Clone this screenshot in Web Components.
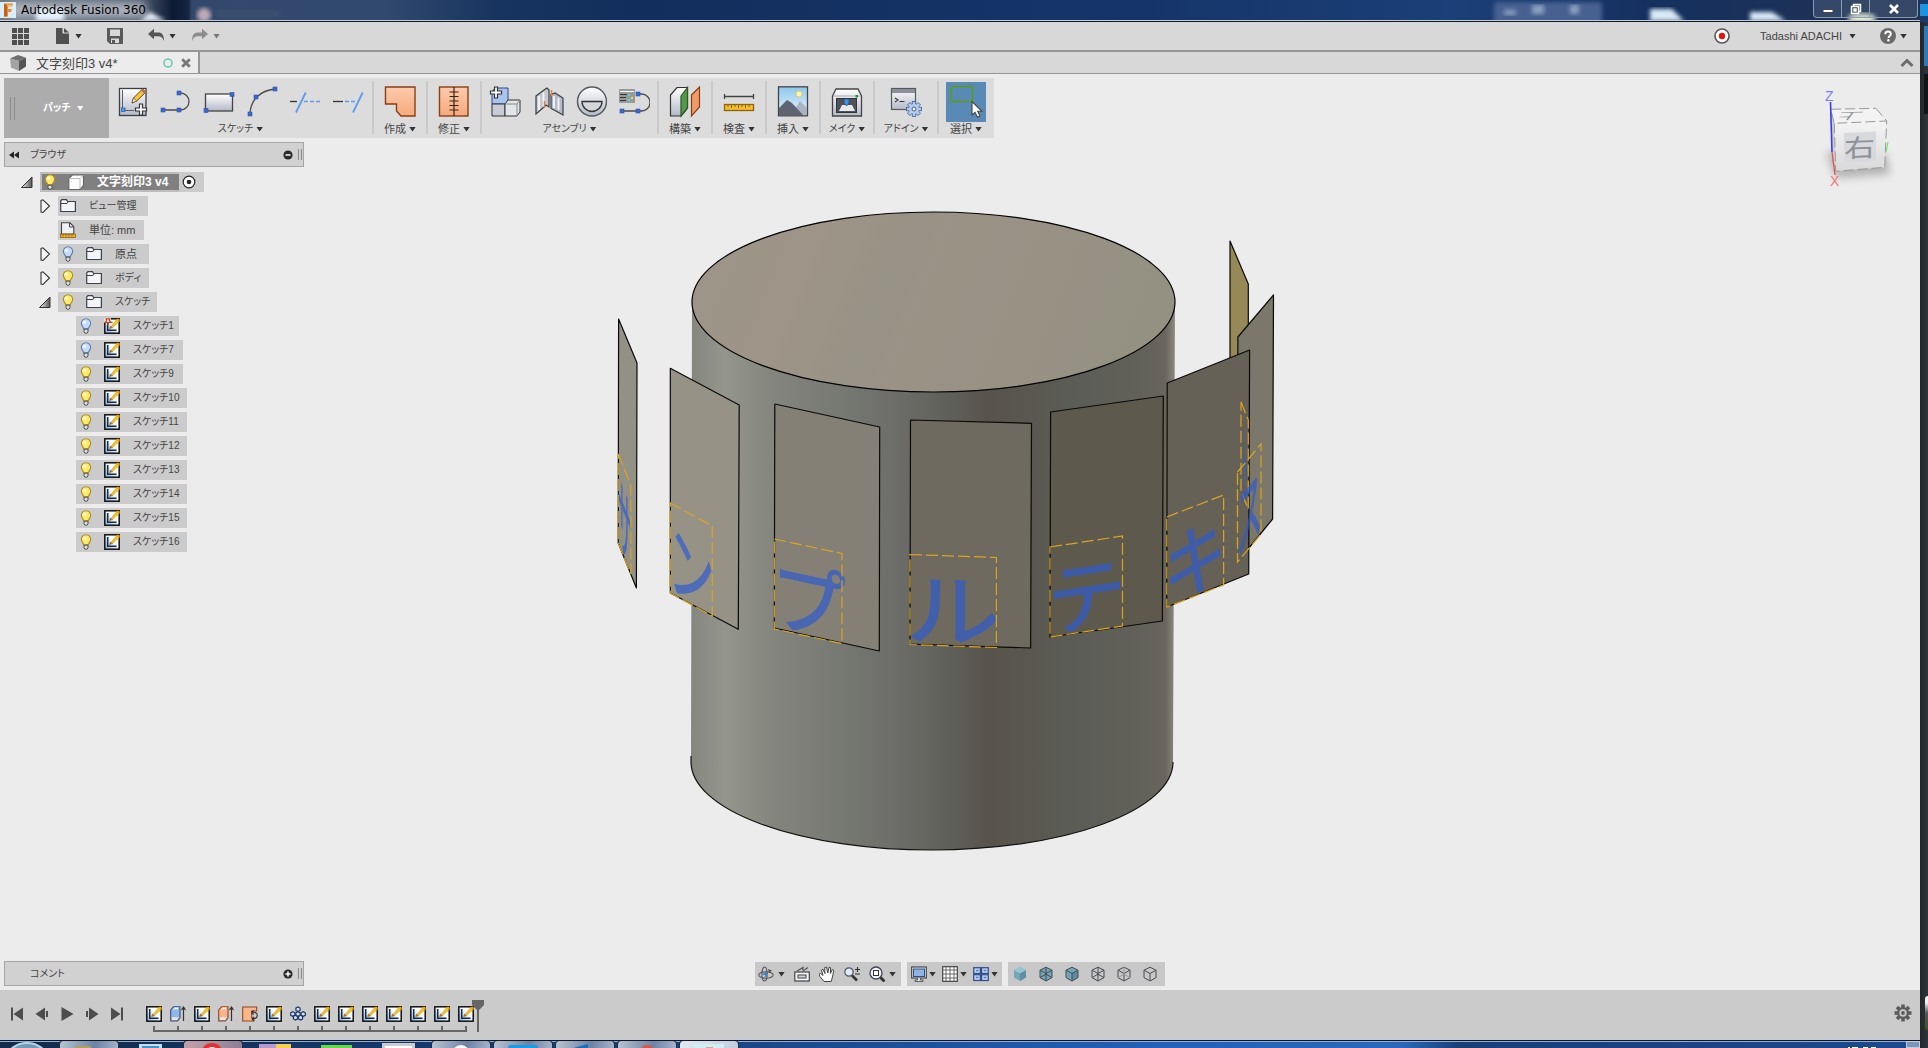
<!DOCTYPE html>
<html lang="ja">
<head>
<meta charset="utf-8">
<title>Autodesk Fusion 360</title>
<style>
html,body{margin:0;height:100%}
body{display:flex;overflow:hidden;background:#2b3035;color:#444;font:11px/16px "Liberation Sans","Noto Sans CJK JP",sans-serif;font-feature-settings:"palt"}
</style>
</head>
<body>
<fusion-app></fusion-app>
<desktop-edge></desktop-edge>
<script>
const BASE = `*{box-sizing:border-box}button{font:inherit;font-feature-settings:inherit;color:inherit;background:none;border:0;padding:0;margin:0;display:flex;align-items:center;cursor:default}svg{display:block}.kana{font-size:10px}`;
/* katakana labels are set one size below the kanji ones */
const kana = s => /[\u30a0-\u30ff]/.test(s) ? 'kana' : '';
function define(name, css, html) {
  customElements.define(name, class extends HTMLElement {
    connectedCallback() {
      if (this.shadowRoot) return;
      const root = this.attachShadow({mode: 'open'});
      root.innerHTML = `<style>${BASE}${css}</style>` + (typeof html === 'function' ? html(this) : html);
    }
  });
}

/* ---------- icons ---------- */
const sq = (x, y) => `<rect x="${x-2}" y="${y-2}" width="4" height="4" fill="#3a68cc" stroke="#2d57b4" stroke-width=".6"/>`;
const steel = `<linearGradient id="s" x1="0" y1="0" x2="0" y2="1"><stop offset="0" stop-color="#fff"/><stop offset="1" stop-color="#b4b9c6"/></linearGradient>`;
const peach = `<linearGradient id="p" x1="0" y1="0" x2="0" y2="1"><stop offset="0" stop-color="#fccbad"/><stop offset="1" stop-color="#f7a97b"/></linearGradient>`;
const bulb = (c, e, d) => `<path d="M8 .8a4.7 4.7 0 0 0-4.7 4.7c0 2.2 1.9 3.200 2.300 5.200h4.800c.4-2 2.300-3 2.300-5.200A4.700 4.700 0 0 0 8 .8z" fill="${c}" stroke="${e}" stroke-width="1.100"/><circle cx="6.500" cy="4.200" r="1.700" fill="${d}"/><path d="M6 11.200h4v2.600L9 15.200H7L6 13.800z" fill="#ddd" stroke="#444" stroke-width=".9"/>`;
const sketch = `<linearGradient id="k" x1="1" y1="0" x2="0" y2="1"><stop offset=".4" stop-color="#fff"/><stop offset="1" stop-color="#7fb6ea"/></linearGradient><rect x=".8" y=".8" width="14.400" height="14.400" fill="url(#k)" stroke="#111" stroke-width="1.500"/><path d="M3.700 3v9.300H12.500" fill="none" stroke="#1c2c44" stroke-width="1.500"/><path d="M5.800 10.300 12.600 1.400 15.600 3 8 10z" fill="#f7c61c" stroke="#b98a10" stroke-width=".5"/><path d="M5.200 11l.9-3.200 2.600 1.700z" fill="#a5683c"/><path d="M12.500 1.500 14 .5 16 1.700 15.300 3.300z" fill="#f59a00"/>`;
const cubeHex = 'M8 1.200 14 4.200V11.600L8 15 2 11.600V4.200z';
const stroke = d => `<path d="${d}" fill="none" stroke="#474b52" stroke-width="1"/>`;
const gearTeeth = (cx, cy, r, w, fill, st = 'none') => { let s = ''; for (let i = 0; i < 8; i++) s += `<rect x="${cx-w/2}" y="${cy-r}" width="${w}" height="${r}" transform="rotate(${i*45} ${cx} ${cy})" fill="${fill}" stroke="${st}" stroke-width=".8"/>`; return s; };
const ICONS = {
  fusion: [16, `<rect width="16" height="16" fill="#d9eef6"/><path d="M4 1.500h9l-1 3H8v2.500h4l-1 3H8v4.500H4z" fill="#ef8b2c"/><path d="M4 1.500l3 2v11H4z" fill="#c9601a"/><path d="M7 3.500h5.500" stroke="#ffc27a"/>`],
  apps: [17, [0,6,12].map(y => [0,6,12].map(x => `<rect x="${x}" y="${y}" width="5" height="5" fill="#505050"/>`).join('')).join('')],
  file: [16, `<path d="M2 0h6.500v5.500H15V16H2z" fill="#505050"/><path d="M10 0 15 4.500H10z" fill="#505050"/>`],
  save: [16, `<path d="M0 0h16v16H3l-3-3z" fill="#5a5a5a"/><path d="M3 1.500h10V8H3zM4 10.500h8V15H4z" fill="#d8d8d8"/><path d="M5 12h3v3H5z" fill="#5a5a5a"/>`],
  undo: [16, `<path d="M0 6 6 .8V4.500h4c4 0 6 2.500 6 8.500-1.500-3.500-3-4.800-6-4.800H6v3z" fill="#555"/>`],
  redo: [16, `<path d="M16 6 10 .8V4.500H6C2 4.500 0 7 0 13c1.500-3.500 3-4.800 6-4.800h4v3z" fill="#8d8d8d"/>`],
  record: [16, `<circle cx="8" cy="8" r="7" fill="#fff" stroke="#555" stroke-width="1.600"/><circle cx="8" cy="8" r="3.200" fill="#e0160e"/>`],
  help: [16, `<circle cx="8" cy="8" r="8" fill="#6a6a6a"/><path d="M5.300 6.200C5.300 4.500 6.400 3.500 8 3.500s2.800.9 2.800 2.500c0 2-2.300 2-2.300 4" fill="none" stroke="#fff" stroke-width="1.900"/><circle cx="8.400" cy="12.300" r="1.200" fill="#fff"/>`],
  up: [14, `<path d="M1.500 10 7 4.500 12.500 10" fill="none" stroke="#6d6d6d" stroke-width="3"/>`],
  doc: [16, `<path d="M0 3.500 8 0l8 2.800-7 3.200z" fill="#6f6f6f"/><path d="M0 3.500 9 6v10L1 12.500z" fill="#a3a3a3"/><path d="M9 6l7-3.200v8.700L9 16z" fill="#555"/>`],
  ring: [12, `<circle cx="6" cy="6" r="4" fill="none" stroke="#6fcab4" stroke-width="1.600"/>`],
  close: [10, `<path d="M1.200 1.200 8.800 8.800M8.800 1.200 1.200 8.800" stroke="#777" stroke-width="2.800"/>`],
  newSketch: [32, steel + `<rect x="2.500" y="2.500" width="26.500" height="27" fill="url(#s)" stroke="#3b3f46" stroke-width="1.300"/><path d="M5.500 4v18.500M8 24.500h9" stroke="#555a66"/><rect x="4.500" y="22" width="3.500" height="3.500" fill="#4e9df0" stroke="#1f5ca8" stroke-width=".7"/><path d="M15 17l1.500-5L25.500 3l3.200 3.200-9 8.800z" fill="#f5c83a" stroke="#5c4620"/><path d="M15 17l1.500-5 3.200 3z" fill="#fff3d8" stroke="#5c4620" stroke-width=".7"/><path d="M24 4.500l1.800-1.700 3 3.200-1.600 1.700z" fill="#c3743c"/><path d="M22.500 18h3v4h4v3h-4v4h-3v-4h-4v-3h4z" fill="#fff" stroke="#333" stroke-width="1.200"/>`],
  line: [32, `<path d="M3 24h17.500a8.500 8.500 0 0 0 0-17H19" fill="none" stroke="#4a4a4a" stroke-width="1.300"/>` + sq(3,24)+sq(19,24)+sq(19,7)],
  rect: [32, steel + `<rect x="2.500" y="8" width="27" height="17" fill="url(#s)" stroke="#444" stroke-width="1.300"/>`+sq(29,8.5)+sq(3,24.5)],
  arc: [32, `<path d="M4 28C4.500 14 14 4.500 29 3" fill="none" stroke="#4a4a4a" stroke-width="1.300"/>`+sq(4,28)+sq(10,11)+sq(29,3)],
  trim: [32, `<path d="M1 15.500h7" stroke="#333" stroke-width="1.300"/><path d="M15 15.500h16" stroke="#5b9cf0" stroke-width="1.300" stroke-dasharray="4 2"/><path d="M7 26.500 16.700 6.500" stroke="#5b9cf0" stroke-width="1.800"/>`],
  extend: [32, `<path d="M1 15.500h10" stroke="#333" stroke-width="1.300"/><path d="M13 15.500h10" stroke="#5b9cf0" stroke-width="1.300" stroke-dasharray="4 2"/><path d="M21 26.500 30.700 6.500" stroke="#5b9cf0" stroke-width="1.800"/>`],
  patch: [32, peach + `<path d="M1.500 1h29.500v29H17l-4.500-5v-7h-11z" fill="url(#p)" stroke="#8a3e14" stroke-width="1.400"/>`],
  stitch: [32, peach + `<rect x="1.500" y="1" width="28.500" height="29" fill="url(#p)" stroke="#8a3e14" stroke-width="1.400"/><path d="M16 1v29M11.500 6h9M11.500 10.500h9M11.500 15h9M11.500 19.500h9M11.500 24h9" stroke="#3a2416" stroke-width="1.200"/>`],
  component: [32, `<path d="M3 6l3-4h13v14l-3 2H3z" fill="#a9c5ee" stroke="#2c4a80"/><path d="M3 18h13v12H3z" fill="#c7ccd6" stroke="#333"/><path d="M16 18l3-4h12v12l-3 4H16z" fill="#e2e5ea" stroke="#333"/><path d="M16 18h12v12M28 18l3-4" fill="none" stroke="#888"/><path d="M5.500 1h3v4h4v3h-4v4h-3V8h-4V5h4z" fill="#fff" stroke="#333" stroke-width="1.200"/>`],
  joint: [32, `<path d="M4 10 12 4l3-2 2 2v17l-3-2-2 2-8 7z" fill="#c4c9d1" stroke="#3b3f46" stroke-width="1.200"/><path d="M7 10v14M11.500 6.500v14" stroke="#f3f5f8" stroke-width="1.800"/><path d="M31 29V12L23 7l-4 1.500v14l4 2z" fill="#b5bbc6" stroke="#3b3f46" stroke-width="1.200"/><path d="M22 10v12M26.500 12v12" stroke="#f3f5f8" stroke-width="1.800"/><path d="M12.500 15v7M19.500 4v6" stroke="#ef7d2b" stroke-width="1.400"/>`],
  jointOrigin: [32, steel + `<circle cx="17" cy="15.500" r="14.500" fill="url(#s)" stroke="#555a61" stroke-width="1.500"/><path d="M7 15.500h20a10 10 0 0 1-20 0z" fill="#d4d7dd" stroke="#333" stroke-width="1.300"/>`],
  motion: [32, `<rect x="1" y="3" width="16" height="14" fill="#9a9a9a"/><path d="M2 5.500h14" stroke="#fff"/><path d="M2 8.500h7M2 11.500h6M2 14.500h6" stroke="#333" stroke-width="1.200"/><path d="M10 9h2M10 14h2" stroke="#3fe0e6" stroke-width="2"/><path d="M13 12h2" stroke="#f4e12c" stroke-width="2"/><path d="M20 8h3.500a8.500 8.500 0 0 1 0 17H4" fill="none" stroke="#4a4a4a" stroke-width="1.300"/>`+sq(20,8)+sq(20,25)+sq(4,25)],
  construct: [32, steel + `<path d="M1.500 9 8 1.500h10.500V22L12 30H1.500z" fill="url(#s)" stroke="#333" stroke-width="1.200"/><path d="M12 10l6.500-8.500V22L12 30z" fill="#54994a" stroke="#2b5a25" stroke-width="1.200"/><path d="M22.500 9 30.500 1v20l-8 9z" fill="#ef9a68" stroke="#8a3e14" stroke-width="1.200"/>`],
  inspect: [32, `<path d="M1.500 10.500h29M1.500 8v5M30.500 8v5" stroke="#444" stroke-width="1.300"/><rect x="1.500" y="18.500" width="29" height="6" fill="#f5bd2b" stroke="#8d6410" stroke-width="1.300"/><path d="M5 19v2M8.500 19v3M12 19v2M15.500 19v3M19 19v2M22.500 19v3M26 19v2" stroke="#8d6410"/>`],
  insert: [32, `<linearGradient id="y" x1="0" y1="0" x2="0" y2="1"><stop offset="0" stop-color="#8cc6ee"/><stop offset="1" stop-color="#eaf6fb"/></linearGradient><rect x="1.500" y=".8" width="29" height="29" fill="url(#y)" stroke="#444" stroke-width="1.300"/><path d="M14 29 23 15l7 7v7z" fill="#a9b4c2"/><path d="M2 22 10 14l5 3 11 12H2z" fill="#5e6471"/><circle cx="22" cy="8" r="3" fill="#fff3b8" stroke="#e8c860"/>`],
  make: [32, steel + `<path d="M1.500 10 5 3h22l3.500 7v20h-29z" fill="url(#s)" stroke="#444" stroke-width="1.300"/><path d="M2 10h28" stroke="#aaa"/><rect x="5.500" y="12.500" width="20" height="14" fill="#4d525b" stroke="#333"/><path d="M8 25l3-6h10l3 6z" fill="#e8eaee"/><path d="M13 13h5v4l-2.500 3-2.500-3z" fill="#4a8fdc" stroke="#1e4c85" stroke-width=".7"/><rect x="24.500" y="9" width="2.500" height="2.500" fill="#1f9a2c"/>`],
  addin: [32, steel + `<rect x="1.500" y="2.500" width="24" height="21" fill="url(#s)" stroke="#555a61" stroke-width="1.200"/><rect x="2" y="3" width="23" height="4" fill="#8a8f98"/><path d="M5 12l3 2-3 2M9.500 15.500h5" fill="none" stroke="#333" stroke-width="1.100"/>` + gearTeeth(24,23,7.5,3.4,'#b7cbea','#3a5f99') + `<circle cx="24" cy="23" r="5" fill="#b7cbea"/><circle cx="24" cy="23" r="2" fill="#fff" stroke="#3a5f99"/>`],
  select: [40, `<rect width="40" height="40" fill="#5989b5"/><rect x="5.500" y="4.500" width="21" height="15" fill="none" stroke="#58a10b" stroke-width="1.400"/><path d="M26 19.500v13.500l3-2.700 2.400 5 2.600-1.200-2.300-4.800H36z" fill="#fff" stroke="#444" stroke-width="1.100"/>`],
  bulbOn: [16, bulb('#ffe96a','#b08a1c','#fffbd0')],
  bulbOff: [16, bulb('#c3dcfb','#5f7fb0','#f2f8ff')],
  cube: [16, `<path d="M.800 4.500 4.500.800h11v10.700L12 15.500H.8z" fill="#fff" stroke="#666" stroke-width="1.200"/><path d="M1 4.500h11V15M12 4.500 15.500 1" fill="none" stroke="#bbb"/>`],
  folder: [16, `<path d="M.700 13.500V3l1.200-1.300h4.600L7.600 3.500h7.800v10z" fill="#f3f5f8" stroke="#3d4149" stroke-width="1.200"/><path d="M1 5.500h6l1-1.500" fill="none" stroke="#3d4149"/>`],
  unit: [16, `<path d="M1.500 12V.8h8.500l3.800 4V12z" fill="#eef1f6" stroke="#444" stroke-width="1.100"/><path d="M9.500 1v4h4" fill="none" stroke="#444"/><rect x=".5" y="12.200" width="15" height="3.200" fill="#f3b41f" stroke="#8d6410" stroke-width=".8"/><path d="M3 13v1.500M6 13v1.500M9 13v1.500M12 13v1.500" stroke="#8d6410"/>`],
  sketch: [16, sketch],
  sketchPin: [16, sketch + `<path d="M0 0h7v5H0z" fill="#e8e4e0"/><path d="M1.500.8h5M2.500 1v2L.800 4.500h6.700L5.500 3V1M4 4.500V7" fill="none" stroke="#c9471e" stroke-width="1.200"/>`],
  target: [16, `<circle cx="8" cy="8" r="5.800" fill="#fff" stroke="#222" stroke-width="1.200"/><circle cx="8" cy="8" r="2.300" fill="#222"/>`],
  open: [16, `<linearGradient id="o"><stop offset="0" stop-color="#eee"/><stop offset="1" stop-color="#555"/></linearGradient><path d="M2.500 13.500h10.500V3z" fill="url(#o)" stroke="#333"/>`],
  shut: [16, `<path d="M4 2.500v11.500l2 .4 6.500-6.400L6 1.800z" fill="#f4f4f4" stroke="#333" stroke-width="1.100"/>`],
  rewind: [12, `<path d="M5 2.500v7L0 6zM10 2.500v7L5 6z" fill="#222"/>`],
  minus: [10, `<circle cx="5" cy="5" r="4.600" fill="#2c2c2c"/><path d="M2.500 5h5" stroke="#fff" stroke-width="1.500"/>`],
  plus: [10, `<circle cx="5" cy="5" r="4.600" fill="#2c2c2c"/><path d="M2.500 5h5M5 2.500v5" stroke="#fff" stroke-width="1.500"/>`],
  orbit: [16, `<ellipse cx="8" cy="9" rx="7.200" ry="3.200" fill="none" stroke="#555" stroke-width="1.100"/><ellipse cx="6.500" cy="8" rx="2.600" ry="7" fill="none" stroke="#555" stroke-width="1.100"/><path d="M7.500 5.500V11M5 8h5" stroke="#2a7fd8" stroke-width="1.300"/><path d="M10 3l4 1.500-3 2.500z" fill="#555"/>`],
  look: [16, `<path d="M3 5 9 1.500 8.500 4M14 1.500 9 5" fill="none" stroke="#555" stroke-width="1.300"/><rect x=".8" y="6" width="14.500" height="9" fill="#f1f3f6" stroke="#444" stroke-width="1.200"/><rect x="4" y="9" width="8" height="3" fill="#cfd3da" stroke="#444"/>`],
  pan: [16, `<path d="M5 15.500 1 10.500 0 8l1.700-.5L4 9.500 2.500 4 4 3.300 6 7.500 5.700 1.500 7.500 1 8.800 7 10 1.200l1.600.5L11.400 7.500 13.300 3.500l1.500.8L13.700 10l-1.500 5.500z" fill="#fff" stroke="#444" stroke-width="1"/>`],
  zoom: [16, `<circle cx="5" cy="6" r="4.200" fill="#dcecf8" stroke="#556" stroke-width="1.200"/><path d="M8 9.500l5 5" stroke="#333" stroke-width="2.600"/><path d="M11 3.500h5M13.500 1v5M11 8h5" stroke="#333" stroke-width="1.100"/>`],
  fit: [16, `<circle cx="7" cy="7" r="6" fill="#eef4f8" stroke="#445" stroke-width="1.300"/><rect x="4.500" y="4.500" width="5" height="5" fill="#fff" stroke="#333"/><path d="M11.500 11.500l4 4" stroke="#333" stroke-width="2.800"/>`],
  display: [16, `<rect x=".7" y="1" width="14.600" height="11" fill="#f2f4f7" stroke="#444" stroke-width="1.200"/><rect x="2.500" y="3" width="11" height="7.500" fill="#8fb4e4" stroke="#2e4f86"/><path d="M6.500 12v2H4v1.500h8V14H9.500v-2" fill="#ddd" stroke="#444" stroke-width=".8"/>`],
  grid: [16, `<rect x=".7" y=".7" width="14.600" height="14.600" fill="#fff" stroke="#444" stroke-width="1.200"/><path d="M4 1v14M8 1v14M12 1v14M1 4h14M1 8h14M1 12h14" stroke="#666"/>`],
  panes: [16, `<rect x=".7" y="1.700" width="6.700" height="5.800" fill="#b9cff0" stroke="#2f4d86" stroke-width="1.200"/><rect x="8.600" y="1.700" width="6.700" height="5.800" fill="#b9cff0" stroke="#2f4d86" stroke-width="1.200"/><rect x=".7" y="8.700" width="6.700" height="5.800" fill="#b9cff0" stroke="#2f4d86" stroke-width="1.200"/><rect x="8.600" y="8.700" width="6.700" height="5.800" fill="#b9cff0" stroke="#2f4d86" stroke-width="1.200"/><path d="M3 4.600h2.500M10.800 4.600h2.500M3 11.600h2.500M10.800 11.600h2.500" stroke="#5f80bb" stroke-width="1.500"/>`],
  v1: [16, `<path d="${cubeHex}" fill="#74a5b8"/><path d="M2 4.200 8 1.200l6 3L8 7.500z" fill="#97c4d2"/><path d="M8 7.500v7.500l6-3.400V4.200z" fill="#5f8ea2"/>`],
  v2: [16, `<path d="${cubeHex}" fill="#74a5b8"/>` + stroke(cubeHex + 'M2 4.200l6 3.300 6-3.300M8 7.500V15M8 1.200v7L2 11.600M8 8.200l6 3.400')],
  v3: [16, `<path d="${cubeHex}" fill="#74a5b8"/><path d="M8 7.500v7.500l6-3.400V4.200z" fill="#5f8ea2"/>` + stroke(cubeHex + 'M2 4.200l6 3.300 6-3.300M8 7.500V15')],
  v4: [16, stroke(cubeHex + 'M2 4.200l6 3.300 6-3.300M8 7.500V15M8 1.200v7L2 11.600M8 8.200l6 3.400')],
  v5: [16, stroke(cubeHex + 'M2 4.200l6 3.300 6-3.300M8 7.500V15') + `<path d="M8 1.200v7L2 11.600M8 8.200l6 3.400" fill="none" stroke="#999"/>`],
  v6: [16, stroke(cubeHex + 'M2 4.200l6 3.300 6-3.300M8 7.500V15')],
  toStart: [16, `<path d="M2 1.500h2v13H2zM14 1.500v13L4.500 8z" fill="#4d4d4d"/>`],
  back: [16, `<path d="M11 1.500v13L1.500 8zM12 5h2v6h-2z" fill="#4d4d4d"/>`],
  play: [16, `<path d="M2.500 1v14L14.500 8z" fill="#4d4d4d"/>`],
  next: [16, `<path d="M5 1.500v13L14.500 8zM2 5h2v6H2z" fill="#4d4d4d"/>`],
  toEnd: [16, `<path d="M12 1.500h2v13h-2zM2 1.500v13L11.500 8z" fill="#4d4d4d"/>`],
  extrude: [16, `<path d="M.700 4 3.500.800H10v11L7.500 15H.7z" fill="#8fb8e8" stroke="#3c5078" stroke-width="1.100"/><path d="M2.500 3.500 4.500 1.500H9L7.500 3.500z" fill="#e2edfa"/><path d="M1.200 11v3.500h6l2.300-3" fill="#e6e6e6" stroke="#666" stroke-width=".7"/><path d="M13.500 15V2M11.500 4l2-3 2 3" fill="none" stroke="#333" stroke-width="1.200"/>`],
  extrudeO: [16, `<path d="M.700 4 3.500.800H10v11L7.500 15H.7z" fill="#f6b48c" stroke="#99431a" stroke-width="1.100"/><path d="M2.500 3.500 4.500 1.500H9L7.500 3.500z" fill="#fde3d2"/><path d="M1.200 11v3.500h6l2.300-3" fill="#e6e6e6" stroke="#666" stroke-width=".7"/><path d="M13.500 15V2M11.500 4l2-3 2 3" fill="none" stroke="#333" stroke-width="1.200"/>`],
  thread: [16, `<path d="M.700 1h14v4h-5v7h2v3H.7z" fill="#f9b78e" stroke="#99431a" stroke-width="1.100"/><path d="M9.500 6.500c7.500-1.500 7.500 6 1 6.500M9.500 6.500l2.200-2M9.500 6.500l2.200 2M10 13l2.200-2M10 13l2.200 2" fill="none" stroke="#333" stroke-width="1.100"/>`],
  pattern: [16, `<path d="M8 3v10M3 8h10" stroke="#24407a"/>` + [[8,3.2],[2.8,8],[13.2,8],[5.5,11.6],[10.5,11.6],[8,8]].map(([x,y]) => `<path d="M${x-2.100} ${y-1.200} ${x} ${y-2.300} ${x+2.100} ${y-1.200}V${y+1.300}L${x} ${y+2.400} ${x-2.100} ${y+1.300}z" fill="#cfe0f6" stroke="#1f3766" stroke-width="1.200"/>`).join('')],
  gear: [18, gearTeeth(9,9,8.5,3.6,'#5c5c5c') + `<circle cx="9" cy="9" r="6" fill="#5c5c5c"/><circle cx="9" cy="9" r="3.700" fill="#cbcbcb"/><circle cx="9" cy="9" r="1.900" fill="#5c5c5c"/>`]
};
define('f-icon', `:host{display:block;flex:none}`, el => {
  const [s, body] = ICONS[el.getAttribute('name')];
  return `<svg width="${s}" height="${s}" viewBox="0 0 ${s} ${s}" aria-hidden="true">${body}</svg>`;
});
define('f-caret', `:host{display:block;flex:none;width:7px;height:5px;background:var(--caret,#333);clip-path:polygon(0 0,100% 0,50% 100%)}`, '');
const ic = n => `<f-icon name="${n}"></f-icon>`;
const CARET = '<f-caret></f-caret>';

/* ---------- window title ---------- */
define('title-bar', `
:host{display:flex;height:22px;flex:none;background:#16335f}
.back{flex:1;display:grid;overflow:hidden;border-bottom:1px solid #101820}
.back>*{grid-area:1/1}
.glass{width:100%;height:21px}
.row{display:flex;align-items:flex-start;justify-content:space-between;border-bottom:1px solid #c5cfdc}
.name{display:flex;align-items:center;gap:5px;height:20px;font:12px/20px "DejaVu Sans",sans-serif;color:#000}
.ctl{display:flex;border:1px solid #8d9bb0;border-top:0;border-radius:0 0 4px 4px;margin-right:2px;height:18px;background:rgba(120,140,165,.25)}
.ctl button{width:28px;justify-content:center;border-right:1px solid #8d9bb0}
.ctl button:last-child{width:47px;border:0}`, `
<div class="back">
<svg class="glass" viewBox="0 0 1920 21" preserveAspectRatio="none" aria-hidden="true">
<defs><filter id="b" x="-50%" y="-100%" width="200%" height="300%"><feGaussianBlur stdDeviation="4"/></filter><filter id="c"><feGaussianBlur stdDeviation="2"/></filter>
<linearGradient id="g"><stop offset="0" stop-color="#6d7888"/><stop offset=".075" stop-color="#46546a"/><stop offset=".09" stop-color="#0d1a33"/><stop offset=".098" stop-color="#14233f"/><stop offset=".1" stop-color="#33496c"/><stop offset=".2" stop-color="#31496e"/><stop offset=".26" stop-color="#17335f"/><stop offset=".33" stop-color="#122e5c"/><stop offset=".6" stop-color="#15356a"/><stop offset=".76" stop-color="#1b3f78"/><stop offset=".86" stop-color="#15305f"/><stop offset="1" stop-color="#203252"/></linearGradient></defs>
<rect width="1920" height="21" fill="url(#g)"/>
<rect x="8" y="2" width="138" height="16" rx="6" fill="#abb1ba" filter="url(#b)"/>
<path d="M36 21V8h28v13zM140 21l10-9 16 9z" fill="#e6f0fa" filter="url(#c)"/>
<circle cx="204" cy="15" r="7" fill="#bfa9b8" filter="url(#c)"/><rect x="216" y="10" width="64" height="8" fill="#3b5070" filter="url(#c)"/>
<rect x="1494" y="2" width="108" height="22" rx="4" fill="#466190" filter="url(#c)"/>
<g fill="#8ba0c0" filter="url(#c)"><rect x="1504" y="10" width="12" height="5"/><rect x="1532" y="5" width="12" height="9"/><rect x="1570" y="5" width="9" height="9"/></g>
<path d="M1650 21V9h22l12 12zM1750 21V12h22l14 9z" fill="#d8e8f5" filter="url(#c)"/>
<ellipse cx="1862" cy="18" rx="14" ry="5" fill="#e9f0d8" filter="url(#c)"/></svg>
<div class="row"><div class="name"><f-icon name="fusion"></f-icon><span>Autodesk Fusion 360</span></div>
<div class="ctl"><button aria-label="最小化"><svg width="12" height="12"><path d="M1 6.500h10v3H1z" fill="#fff" stroke="#445"/></svg></button><button aria-label="元に戻す"><svg width="12" height="12"><path d="M3.500 3V1.500h7v7H9M1.500 3.500h7v7h-7zM4 6h2v2H4z" fill="none" stroke="#fff" stroke-width="1.500"/></svg></button><button aria-label="閉じる"><svg width="12" height="12"><path d="M2 2l8 8M10 2l-8 8" stroke="#fff" stroke-width="2.600"/></svg></button></div></div>
</div>`);

/* ---------- quick access ---------- */
define('quick-bar', `
:host{display:flex;justify-content:space-between;height:30px;flex:none;padding:0 13px 0 12px;background:#d8d8d8;border-bottom:2px solid #969696}
div{display:flex;align-items:center}
button{gap:5px}
.l{gap:25px}.l .dim{--caret:#777;margin-left:-9px}
.r{gap:24px}.who{gap:7px;margin-left:6px}.h{gap:4px}`, `
<div class="l"><button aria-label="データ">${ic('apps')}</button><button aria-label="ファイル">${ic('file')}${CARET}</button><button aria-label="保存">${ic('save')}</button><button aria-label="元に戻す">${ic('undo')}${CARET}</button><button class="dim" aria-label="やり直し">${ic('redo')}${CARET}</button></div>
<div class="r"><button aria-label="記録">${ic('record')}</button><button class="who">Tadashi ADACHI${CARET}</button><button class="h" aria-label="ヘルプ">${ic('help')}${CARET}</button></div>`);

define('tab-bar', `
:host{display:flex;justify-content:space-between;height:22px;flex:none;background:#d8d8d8;border-bottom:1px solid #969696}
.tab{display:flex;align-items:center;width:200px;padding:0 7px 0 10px;background:#ececec;border-right:2px solid #969696}
.n{flex:1;margin-left:10px;font-size:13px;line-height:20px;padding-top:2px}
.tab button{margin-left:7px}
.up{margin-right:6px}`, `
<div class="tab">${ic('doc')}<span class="n">文字刻印3 v4*</span>${ic('ring')}<button aria-label="タブを閉じる">${ic('close')}</button></div>
<button class="up" aria-label="折りたたむ">${ic('up')}</button>`);

/* ---------- ribbon ---------- */
define('tool-group', `
:host{display:flex;flex-direction:column;align-items:center;padding:8px var(--pad,10px) 0;border-right:2px solid #c9c9c9;border-image:linear-gradient(transparent 4px,#c9c9c9 4px,#c9c9c9 55px,transparent 55px) 1}
:host(:last-of-type){border:0;padding:4px 8px 0 7px}
.i{display:flex;gap:11px}
.t{gap:3px;height:16px;margin:3px -12px 0;white-space:nowrap}
:host(:last-of-type) .t{margin-top:-1px}`, el => `
<div class="i">${el.getAttribute('icons').split(' ').map(n => `<button aria-label="${n}">${ic(n)}</button>`).join('')}</div>
<button class="t ${kana(el.getAttribute('label'))}">${el.getAttribute('label')}${CARET}</button>`);
define('tool-ribbon', `
:host{display:flex;height:60px;background:#dcdcdc;width:max-content}
.mode{width:105px;background:#acacac;color:#fff;font-weight:700;--caret:#fff;gap:6px}
.mode i{width:5px;height:23px;margin:0 22px 0 6px;border:solid #8b8b8b;border-width:0 1px}`, `
<button class="mode kana"><i></i>パッチ${CARET}</button>
<tool-group style="--pad:8px" icons="newSketch line rect arc trim extend" label="スケッチ"></tool-group>
<tool-group icons="patch" label="作成"></tool-group>
<tool-group icons="stitch" label="修正"></tool-group>
<tool-group style="--pad:7px" icons="component joint jointOrigin motion" label="アセンブリ"></tool-group>
<tool-group icons="construct" label="構築"></tool-group>
<tool-group icons="inspect" label="検査"></tool-group>
<tool-group icons="insert" label="挿入"></tool-group>
<tool-group icons="make" label="メイク"></tool-group>
<tool-group style="--pad:15px" icons="addin" label="アドイン"></tool-group>
<tool-group icons="select" label="選択"></tool-group>`);

/* ---------- browser panel ---------- */
define('panel-head', `
:host{display:flex;align-items:center;width:300px;height:25px;background:#d1d1d1;border:1px solid #a6a6a6;padding:0 1px 0 4px}
.lead{width:12px;margin-right:9px}.n{flex:1}
i{width:4px;height:11px;margin-left:5px;border:solid #8b8b8b;border-width:0 1px}`, el => `
<div class="lead">${el.hasAttribute('lead') ? `<button aria-label="隠す">${ic('rewind')}</button>` : ''}</div><span class="n ${kana(el.textContent)}"><slot></slot></span><button aria-label="切り替え">${ic(el.getAttribute('end'))}</button><i></i>`);
define('tree-row', `
:host{display:flex;align-items:center;height:20px;padding-left:calc(15px + var(--lv,0)*18px)}
.x{width:16px;margin-right:5px}
.chip{display:flex;align-items:center;height:20px;min-width:var(--w);padding-left:2px;background:#cbcbcb;white-space:nowrap}
f-icon+f-icon{margin-left:10px}.n{margin-left:13px}
:host([root]) .chip{padding:0}
:host([root]) .in{display:flex;align-items:center;width:139px;height:20px;border:2px solid #bdbdbd;border-right:0;background:#808080;color:#fff;font-weight:700}
:host([root]) .n{font-size:12px}
:host(:not([root])) .in{display:contents}
.chip button{margin-left:2px}`, el => {
  const x = el.getAttribute('x'), icons = el.getAttribute('icons').split(' ');
  return `<div class="x">${x ? `<button aria-label="展開">${ic(x)}</button>` : ''}</div><div class="chip"><div class="in">${icons.map(ic).join('')}<span class="n ${kana(el.textContent)}"><slot></slot></span></div>${el.hasAttribute('root') ? `<button aria-label="アクティブ">${ic('target')}</button>` : ''}</div>`;
});
const row = (lv, x, icons, w, text, extra = '') => `<tree-row style="--lv:${lv};--w:${w}px" x="${x}" icons="${icons}" ${extra}>${text}</tree-row>`;
define('browser-tree', `:host{display:block}.t{display:flex;flex-direction:column;gap:4px;margin-top:5px}`, `
<panel-head lead end="minus">ブラウザ</panel-head>
<div class="t">
${row(0,'open','bulbOn cube',164,'文字刻印3 v4','root')}
${row(1,'shut','folder',90,'ビュー管理')}
${row(1,'','unit',86,'単位: mm')}
${row(1,'shut','bulbOff folder',91,'原点')}
${row(1,'shut','bulbOn folder',91,'ボディ')}
${row(1,'open','bulbOn folder',99,'スケッチ')}
${row(2,'','bulbOff sketchPin',103,'スケッチ1')}
${row(2,'','bulbOff sketch',107,'スケッチ7')}
${row(2,'','bulbOn sketch',107,'スケッチ9')}
${[10,11,12,13,14,15,16].map(n => row(2,'','bulbOn sketch',111,'スケッチ'+n)).join('')}
</div>`);

/* ---------- view cube ---------- */
define('view-cube', `:host{display:block}svg{font-family:"Noto Sans CJK JP",sans-serif}`, `
<svg width="80" height="110" viewBox="1815 84 80 110">
<defs><filter id="s" x="-40%" y="-40%" width="180%" height="180%"><feGaussianBlur stdDeviation="4"/></filter><linearGradient id="f" x1="0" y1="0" x2="0" y2="1"><stop offset="0" stop-color="#f4f4f4"/><stop offset="1" stop-color="#d9d9d9"/></linearGradient></defs>
<path d="M1826 152l60 2 4 20-54 4z" fill="#8a8a8a" opacity=".6" filter="url(#s)"/>
<path d="M1830.700 109.300 1834.300 123.300 1835.700 171.300 1831.700 152z" fill="#cfcfcf"/>
<path d="M1830.700 109.300 1876 108.300 1886.700 121 1834.300 123.300z" fill="#f3f3f3"/>
<path d="M1834.300 123.300 1886.700 121 1884.700 167.300 1835.700 171.300z" fill="url(#f)"/>
<path d="M1844 133l32-1.500v29.500l-31.500 1.500z" fill="#d7d9dd"/>
<path d="M1876 108.300 1886.700 121 1834.300 123.300 1830.700 109.300zM1834.300 123.300l1.400 48 49-4 2-46.300" fill="none" stroke="#999" stroke-dasharray="10 4"/>
<text transform="matrix(1 -.04 0 .8 1844 157.500)" font-size="31" fill="#8d9299">右</text>
<text transform="matrix(-1 .02 .300 -.400 1864 112)" font-size="24" fill="#8d9299">上</text>
<path d="M1830.500 102 1832 152" stroke="#3b3be8" stroke-width="1.600"/><path d="M1832 152l3 23" stroke="#e05050" stroke-width="1.300"/><path d="M1888 142l-2 10" stroke="#6be86b" stroke-width="1.200"/>
<g font-family="Liberation Sans,sans-serif" font-size="14"><text x="1825" y="101" fill="#7c7cf6">Z</text><text x="1830" y="186" fill="#f07878">X</text></g></svg>`);

/* ---------- model ---------- */
const EM = 84;
const PLATES = [
  ['ト', [1230,241,1248.300,284,1248.300,509,1230,465], '#978957', [1241,402,1248.300,420,89]],
  ['ス', [1237.900,337,1273.500,295,1272.600,519,1237.500,562], '#7b776a', [1237.500,472,1261,444,90]],
  ['キ', [1167.200,383,1249.600,350,1248.700,574,1166.800,607], '#666156', [1166.800,517,1223.600,495,90]],
  ['テ', [1050.600,412,1163.300,396,1162.400,621,1050,637], '#5e594d', [1050,547,1122.500,536,90]],
  ['ル', [910.500,420,1031.500,423.300,1030.600,648,910,644], '#6e6a5f', [910,554.500,996.400,557.500,90]],
  ['プ', [774.800,404,879.700,427,879.300,651,774.300,628], '#848075', [774.300,539,842,553.500,90]],
  ['ン', [670.300,368.300,739.200,405,738.300,629.300,670.300,593], '#969286', [670.300,503,712.300,526,90]],
  ['サ', [618.600,319,637,363,636.400,588,618.200,543], '#939085', [618.200,454,630.800,485,89]]
];
define('model-view', `:host{display:block;min-width:0;min-height:0}svg{width:100%;height:100%;font-family:"Noto Sans CJK JP",sans-serif;font-feature-settings:normal}`, `
<svg viewBox="0 74 1920 916">
<defs><linearGradient id="side">${[[0,'#85877f'],[.07,'#94968d'],[.17,'#84857d'],[.3,'#777973'],[.42,'#6d6e69'],[.53,'#60605b'],[.61,'#58544c'],[.68,'#59564e'],[.78,'#5b5c55'],[.93,'#61615a'],[.98,'#69655c'],[1,'#8e897e']].map(([o,c]) => `<stop offset="${o}" stop-color="${c}"/>`).join('')}</linearGradient>
<linearGradient id="top" x1="0" y1="0" x2="1" y2=".15"><stop offset="0" stop-color="#9c9589"/><stop offset=".28" stop-color="#9e9487"/><stop offset=".45" stop-color="#979386"/><stop offset=".57" stop-color="#9b9286"/><stop offset="1" stop-color="#949183"/></linearGradient></defs>
<path d="M692 302L691 762a241 88 0 0 0 482 0L1175 302z" fill="url(#side)"/>
<path d="M691 756v6a241 88 0 0 0 482 0" fill="none" stroke="#111" stroke-width="1.200"/>
<ellipse cx="933.500" cy="302" rx="241.500" ry="90" fill="url(#top)" stroke="#000" stroke-width="1.200"/>
${PLATES.map(([, p, c]) => `<path d="M${p.join(' ')}z" fill="${c}" stroke="#0a0a0a" stroke-width="1.200" stroke-linejoin="round"/>`).join('')}
${PLATES.map(([t, , , [x, y, x2, y2, h]]) => { const u = (x2-x)/EM, v = (y2-y)/EM; return `<text transform="matrix(${u*1.1} ${v*1.1} 0 .94 ${x-4*u} ${y+h-6-4*v})" font-size="${EM}" font-weight="400" fill="#2d5bcf" stroke="#2d5bcf" stroke-width="1.500" opacity=".68">${t}</text><path d="M${x} ${y} ${x2} ${y2}V${y2+h}L${x} ${y+h}z" fill="none" stroke="#d9a520" stroke-width="1.200" stroke-dasharray="12 4"/>`; }).join('')}
</svg>`);

/* ---------- navigation strip ---------- */
const nav = (list) => list.map(n => n.endsWith('+') ? `<button aria-label="${n.slice(0,-1)}">${ic(n.slice(0,-1))}${CARET}</button>` : `<button aria-label="${n}">${ic(n)}</button>`).join('');
define('nav-strip', `
:host{display:flex;gap:6px}
div{display:flex;align-items:center;height:24px;padding:0 4px;background:#c8c8c8;gap:9px}
div:nth-of-type(1){padding:0 5px 0 3px}
div:nth-of-type(1) button{gap:4px}
div:nth-of-type(2){gap:6px}
div:nth-of-type(3){gap:10px;padding-right:7px}
button{gap:2px}`, `
<div>${nav(['orbit+','look','pan','zoom','fit+'])}</div><div>${nav(['display+','grid+','panes+'])}</div><div>${nav(['v1','v2','v3','v4','v5','v6'])}</div>`);

define('work-area', `
:host{display:grid;flex:1;min-height:0;grid-template:minmax(0,1fr)/minmax(0,1fr);background:#ececec}
model-view,.ui{grid-area:1/1}
.ui{display:flex;flex-direction:column;padding:4px 0 4px 4px;z-index:1}
.mid{display:flex;justify-content:space-between;flex:1;margin-top:4px}
view-cube{margin:-58px 25px 0 0}
.foot{display:grid;grid-template-columns:1fr auto 1fr;align-items:end}
.foot nav-strip{margin-left:-4px}`, `
<model-view></model-view>
<div class="ui"><tool-ribbon></tool-ribbon>
<div class="mid"><browser-tree></browser-tree><view-cube></view-cube></div>
<div class="foot"><panel-head end="plus">コメント</panel-head><nav-strip></nav-strip><span></span></div></div>`);

/* ---------- timeline ---------- */
define('time-line', `
:host{display:flex;height:50px;flex:none;background:#cbcbcb;padding:0 8px 0 9px}
.play{display:flex;gap:9px;padding-top:16px;height:32px;margin-right:16px}
.track{display:flex;padding-top:16px;margin-left:1px}
.step{display:flex;flex-direction:column;align-items:center;width:24px}
.step::after{content:"";width:100%;height:6px;margin-top:4px;background:linear-gradient(#666,#666) 50% 0/2px 6px no-repeat,linear-gradient(#666,#666) 0 4px/100% 2px no-repeat}
.step:first-child::after{width:13px;margin-left:11px;background-position:0 0,0 4px}
.step:nth-last-child(2)::after{width:13px;margin-right:11px;background-position:100% 0,0 4px}
.head{margin:-6px 0 0 -6px;position:relative}
.gear{margin:14px 0 0 auto;align-self:flex-start}`, `
<div class="play">${nav(['toStart','back','play','next','toEnd'])}</div>
<div class="track">${['sketch','extrude','sketch','extrudeO','thread','sketch','pattern',...Array(7).fill('sketch')].map(n => `<div class="step"><button aria-label="${n}">${ic(n)}</button></div>`).join('')}
<div class="head"><svg width="12" height="32"><path d="M0 0h12v5L7 10v22H5V10L0 5z" fill="#666"/></svg></div></div>
<button class="gear" aria-label="設定">${ic('gear')}</button>`);

/* ---------- task bar ---------- */
const TASKS = [
  ['on', '<path d="M15 5h16v3H15z" fill="#b59d5c"/>'], ['', '<path d="M17 3h23v5H17z" fill="#bfe0f4"/><path d="M20 5h17v3H20z" fill="#4d8fc0"/>'],
  ['pink', '<circle cx="28" cy="13" r="9" fill="#fff" stroke="#e03030" stroke-width="4"/>'], ['', '<path d="M13 3h17v5H13z" fill="#b69acb"/><path d="M30 3h15v5H30z" fill="#f7cf50"/>'],
  ['', '<path d="M13 4h31v4H13z" fill="#63dc43"/>'], ['', '<path d="M12 2h33v6H12z" fill="#ccc"/><path d="M15 5h27v3H15z" fill="#fff"/>'],
  ['on', '<circle cx="29" cy="13" r="9" fill="#fff"/>'], ['on', '<rect x="14" y="4" width="30" height="9" rx="3" fill="#1a9bea"/>'],
  ['on', '<path d="M14 8 32 3v5z" fill="#1471bd"/>'], ['on', '<circle cx="29" cy="11" r="7" fill="#df5440"/>'], ['act', '<path d="M13 3h31v5H13z" fill="#d3edf6"/><path d="M26 6h7v2h-7z" fill="#e0a878"/>']];
define('task-bar', `
:host{display:flex;height:8px;flex:none;overflow:hidden;border-top:1px solid #0d1626;background:linear-gradient(#8fb0dc 1px,transparent 1px),linear-gradient(90deg,#122a4c,#17427f 35%,#2460b8 60%,#2a68bc 73%,#1a3e78 76%,#1b4a90)}
.orb{width:60px}.list{display:flex;gap:4px;flex:1}
.list button{width:58px;align-items:flex-start;border-radius:3px 3px 0 0}
.on{background:linear-gradient(100deg,#b9c4d2,#6d82a4 60%,#a6b4ca);outline:1px solid #1c2c45}.pink{background:linear-gradient(100deg,#c4a2aa,#8d7f95);outline:1px solid #1c2c45}.act{background:linear-gradient(100deg,#e3eaf2,#c2cede);outline:1px solid #1c2c45}
.clock{margin-right:28px}.show{width:14px;background:#7c94ba;border:1px solid #c0cde0}`, `
<button class="orb" aria-label="スタート"><svg width="60" height="8"><ellipse cx="27" cy="16" rx="19" ry="14" fill="#6f9ab8" stroke="#b8d4e4" stroke-width="2"/></svg></button>
<div class="list">${TASKS.map(([c, s]) => `<button class="${c}" aria-label="アプリ"><svg width="58" height="8">${s}</svg></button>`).join('')}</div>
<svg class="clock" width="32" height="8"><path d="M2 6h2v2H2zM6 6h6v1H6zM17 6h5v2h-5zM25 6h5v2h-5z" fill="#fff"/></svg><button class="show" aria-label="デスクトップ"></button>`);

define('fusion-app', `:host{display:flex;flex-direction:column;flex:1;min-width:0;height:100%}`, `
<title-bar></title-bar><quick-bar></quick-bar><tab-bar></tab-bar><work-area></work-area><time-line></time-line><task-bar></task-bar>`);
define('desktop-edge', `
:host{display:flex;flex-direction:column;width:8px;flex:none;background:linear-gradient(90deg,#20262a,#2f3539)}
i{display:block}.a{height:22px;background:linear-gradient(#173a6c 4px,#1a95e0 4px,#1a95e0 16px,#173a6c 16px)}
.b{height:40px;margin:4px 0 8px 4px;background:#2b79b8}.c{height:40px;margin-left:4px;background:#111518}
.d{height:34px;width:3px;margin:auto 0 18px 5px;border-radius:4px 0 0 4px;background:linear-gradient(#eee 20%,#555 50%,#3c5428)}`, `
<i class="a"></i><i class="b"></i><i class="c"></i><i class="d"></i>`);
</script>
</body>
</html>
